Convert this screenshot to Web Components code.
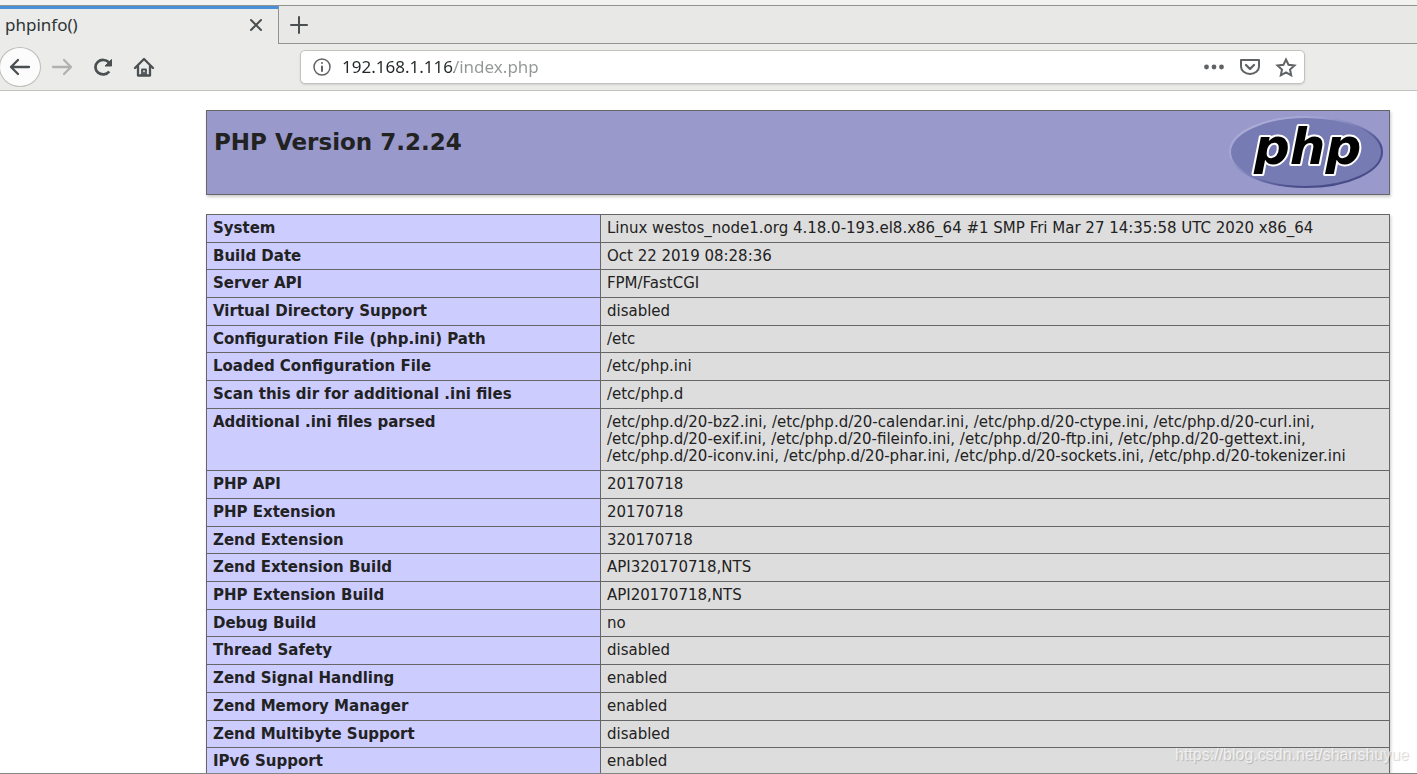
<!DOCTYPE html>
<html lang="en">
<head>
<meta charset="utf-8">
<title>phpinfo()</title>
<style>
  html, body { height: 100%; margin: 0; }
  body { overflow: hidden; background: #fff; }
</style>
</head>
<body>
<browser-window>
  <tab-strip slot="chrome">phpinfo()</tab-strip>
  <nav-bar slot="chrome" host="192.168.1.116" path="/index.php"></nav-bar>
  <php-info>
    <php-banner>PHP Version 7.2.24</php-banner>
    <info-table></info-table>
  </php-info>
</browser-window>

<script>
const define = (name, html, setup) => customElements.define(name, class extends HTMLElement {
  constructor() {
    super();
    this.attachShadow({ mode: 'open' }).innerHTML = html;
  }
  connectedCallback() { if (setup) setup(this, this.shadowRoot); }
});

define('browser-window', `
  <style>
    :host { display: flex; flex-direction: column; height: 100vh; position: relative; box-sizing: border-box;
      border-bottom: 1px solid #858585; font-family: "Noto Sans", sans-serif; color: #2e3436; overflow: hidden; }
    header { flex: none; }
    main { flex: 1; min-height: 0; overflow: hidden; background: #fff; }
    .mark { position: absolute; right: 8px; bottom: 8px; font: 16px/20px "Liberation Sans", sans-serif;
      color: rgba(255,255,255,.7); text-shadow: 1px 1px 1px rgba(0,0,0,.18); }
  </style>
  <header><slot name="chrome"></slot></header>
  <main><slot></slot></main>
  <div class="mark">https://blog.csdn.net/shanshuyue</div>`);

define('tab-strip', `
  <style>
    :host { display: block; background: #f2f2f1; padding-top: 5px; }
    .strip { display: flex; height: 39px; box-sizing: border-box; border-top: 1px solid #92928f; background: #e8e8e6; }
    .tab { display: flex; align-items: center; width: 279px; box-sizing: border-box; padding: 0 10px 4px 5px;
      border-top: 3px solid #4a90d9; border-right: 1px solid #92928f; background: #ebebe9; }
    .title { flex: 1; font-size: 17px; line-height: 22px; }
    .rest { flex: 1; display: flex; align-items: center; padding-left: 8px; border-bottom: 1px solid #92928f; }
    button { display: grid; place-items: center; width: 24px; height: 24px; padding: 0; border: 0; background: none; }
    svg { fill: none; stroke: #4a4f51; stroke-width: 2; stroke-linecap: round; }
  </style>
  <div class="strip">
    <div class="tab"><span class="title"><slot></slot></span>
      <button aria-label="Close tab"><svg width="14" height="14"><path d="M2 2l10 10M12 2L2 12"/></svg></button></div>
    <div class="rest"><button aria-label="New tab"><svg width="20" height="20"><path d="M10 2v16M2 10h16"/></svg></button></div>
  </div>`);

define('nav-bar', `
  <style>
    :host { display: block; }
    nav { display: flex; align-items: center; height: 47px; box-sizing: border-box; background: #ebebe9; border-bottom: 1px solid #c2c2be; }
    button { display: grid; place-items: center; width: 41px; height: 40px; padding: 0; border: 0; background: none; }
    .back { width: 42px; background: #fcfcfc; border: 1px solid #bdbdb9; border-radius: 50%; margin-left: -1px; }
    svg { fill: none; stroke: #4a4f51; stroke-width: 2.300; stroke-linecap: round; stroke-linejoin: round; }
    .off svg { stroke: #b0b1b0; }
    .url { flex: 1; display: flex; align-items: center; height: 34px; box-sizing: border-box; margin-left: 136px; margin-right: 112px;
      padding: 0 0 0 7px; background: #fff; border: 1px solid #c2c2be; border-radius: 5px; box-shadow: 0 1px 2px rgba(0,0,0,.12); }
    .url svg { stroke: #606365; stroke-width: 2; }
    .url button { width: 28px; height: 28px; }
    .url .act { width: 36px; }
    input { flex: 1; min-width: 0; margin: 0; padding: 0 0 2px 6px; border: 0; outline: 0; height: 28px; box-sizing: border-box; font: 17px/24px "Noto Sans", sans-serif;
      color: #222829; -webkit-text-fill-color: transparent;
      background: linear-gradient(90deg, #222829 118px, #939696 118px); -webkit-background-clip: text; background-clip: text; }
  </style>
  <nav>
    <button class="back" aria-label="Back"><svg width="22" height="18"><path d="M20 9H2M9 2L2 9l7 7"/></svg></button>
    <button class="off" aria-label="Forward"><svg width="22" height="18"><path d="M2 9h18M13 2l7 7-7 7"/></svg></button>
    <button aria-label="Reload"><svg width="22" height="20" style="stroke-linecap:butt;stroke-width:2.700"><path d="M17.300 14.500A7.700 7.200 0 1 1 17 5.500"/><path d="M19.500 2.500v6.500h-6.500z" style="fill:#4a4f51;stroke-width:1"/></svg></button>
    <button aria-label="Home"><svg width="22" height="20"><path d="M2 11l9-9 9 9M5 9.500v9h12v-9"/><path d="M9 18v-5.500h4V18M11 15.500v2" style="stroke-width:1.800"/></svg></button>
    <div class="url">
      <button aria-label="Site information"><svg width="20" height="20" style="stroke-width:1.500"><circle cx="10" cy="10" r="8"/><path d="M10 9.500v4.500M10 6v.1" style="stroke-width:2"/></svg></button>
      <input type="text" aria-label="Address" spellcheck="false">
      <button class="act" aria-label="Page actions"><svg width="22" height="6"><g style="fill:#606365;stroke:none"><circle cx="3.500" cy="3" r="2.400"/><circle cx="11" cy="3" r="2.400"/><circle cx="18.500" cy="3" r="2.400"/></g></svg></button>
      <button class="act" aria-label="Save to Pocket"><svg width="22" height="18"><path d="M2 2h18v6.500a9 7.500 0 0 1-18 0z"/><path d="M7 7l4 4 4-4" style="stroke-width:2.300"/></svg></button>
      <button class="act" aria-label="Bookmark"><svg width="22" height="20" style="stroke-linejoin:miter"><path d="M11 2.500l2.500 5.300 6 .7-4.500 4 1.200 5.800-5.200-2.900-5.200 2.900 1.200-5.800-4.500-4 6-.7z"/></svg></button>
    </div>
  </nav>`, (el, root) => {
    root.querySelector('input').value = el.getAttribute('host') + el.getAttribute('path');
  });

define('php-info', `
  <style>
    :host { display: flex; flex-direction: column; gap: 19px; padding: 19px 27px 0 206px;
      font-family: "DejaVu Sans", sans-serif; color: #222; }
  </style>
  <slot></slot>`);

define('php-banner', `
  <style>
    :host { display: flex; justify-content: space-between; height: 85px; box-sizing: border-box; padding: 4px 5px 4px 7px;
      background: #9999cc; border: 1px solid #666; box-shadow: 1px 2px 3px #ccc; }
    h1 { margin: 13px 0 0; font-size: 23px; line-height: 28px; font-weight: bold; }
    svg { display: block; }
  </style>
  <h1><slot></slot></h1>
  <svg width="156" height="75" role="img" aria-label="PHP logo">
    <defs><linearGradient id="rim" x1="0" y1="0" x2="1" y2="1">
      <stop offset="0" stop-color="#b4b6dc"/><stop offset=".3" stop-color="#a0a2d0"/>
      <stop offset=".5" stop-color="#777bb3"/><stop offset=".7" stop-color="#484c89"/><stop offset="1" stop-color="#484c89"/>
    </linearGradient></defs>
    <ellipse cx="78" cy="37" rx="76" ry="35" fill="#777bb3" stroke="url(#rim)" stroke-width="2"/>
    <text x="26" y="49" font-family="DejaVu Sans" font-size="50" font-weight="bold" font-style="italic"
      fill="#000" stroke="#fff" stroke-width="4" stroke-linejoin="round" paint-order="stroke">php</text>
  </svg>`);

define('info-table', `
  <style>
    :host { display: block; }
    table { width: 100%; height: 562px; table-layout: fixed; border-collapse: collapse; box-shadow: 1px 2px 3px #ccc; }
    th, td { padding: 5px 6px 4px; border: 1px solid #666; font-size: 15px; line-height: 17px; text-align: left; vertical-align: top; }
    col.name { width: 33.3%; }
    th { background: #ccccff; font-weight: bold; }
    td { background: #ddd; }
  </style>
  <table><colgroup><col class="name"><col></colgroup><tbody></tbody></table>`, (el, root) => {
    const body = root.querySelector('tbody');
    const rows = [
      ['System', 'Linux westos_node1.org 4.18.0-193.el8.x86_64 #1 SMP Fri Mar 27 14:35:58 UTC 2020 x86_64'],
      ['Build Date', 'Oct 22 2019 08:28:36'],
      ['Server API', 'FPM/FastCGI'],
      ['Virtual Directory Support', 'disabled'],
      ['Configuration File (php.ini) Path', '/etc'],
      ['Loaded Configuration File', '/etc/php.ini'],
      ['Scan this dir for additional .ini files', '/etc/php.d'],
      ['Additional .ini files parsed', '/etc/php.d/20-bz2.ini, /etc/php.d/20-calendar.ini, /etc/php.d/20-ctype.ini, /etc/php.d/20-curl.ini,\n/etc/php.d/20-exif.ini, /etc/php.d/20-fileinfo.ini, /etc/php.d/20-ftp.ini, /etc/php.d/20-gettext.ini,\n/etc/php.d/20-iconv.ini, /etc/php.d/20-phar.ini, /etc/php.d/20-sockets.ini, /etc/php.d/20-tokenizer.ini'],
      ['PHP API', '20170718'],
      ['PHP Extension', '20170718'],
      ['Zend Extension', '320170718'],
      ['Zend Extension Build', 'API320170718,NTS'],
      ['PHP Extension Build', 'API20170718,NTS'],
      ['Debug Build', 'no'],
      ['Thread Safety', 'disabled'],
      ['Zend Signal Handling', 'enabled'],
      ['Zend Memory Manager', 'enabled'],
      ['Zend Multibyte Support', 'disabled'],
      ['IPv6 Support', 'enabled'],
    ];
    body.replaceChildren(...rows.map(([name, value]) => {
      const tr = document.createElement('tr');
      const th = document.createElement('th');
      const td = document.createElement('td');
      th.scope = 'row';
      th.textContent = name;
      value.split('\n').forEach((line, i) => {
        if (i) td.append(document.createElement('br'));
        td.append(line);
      });
      tr.append(th, td);
      return tr;
    }));
  });
</script>
</body>
</html>
